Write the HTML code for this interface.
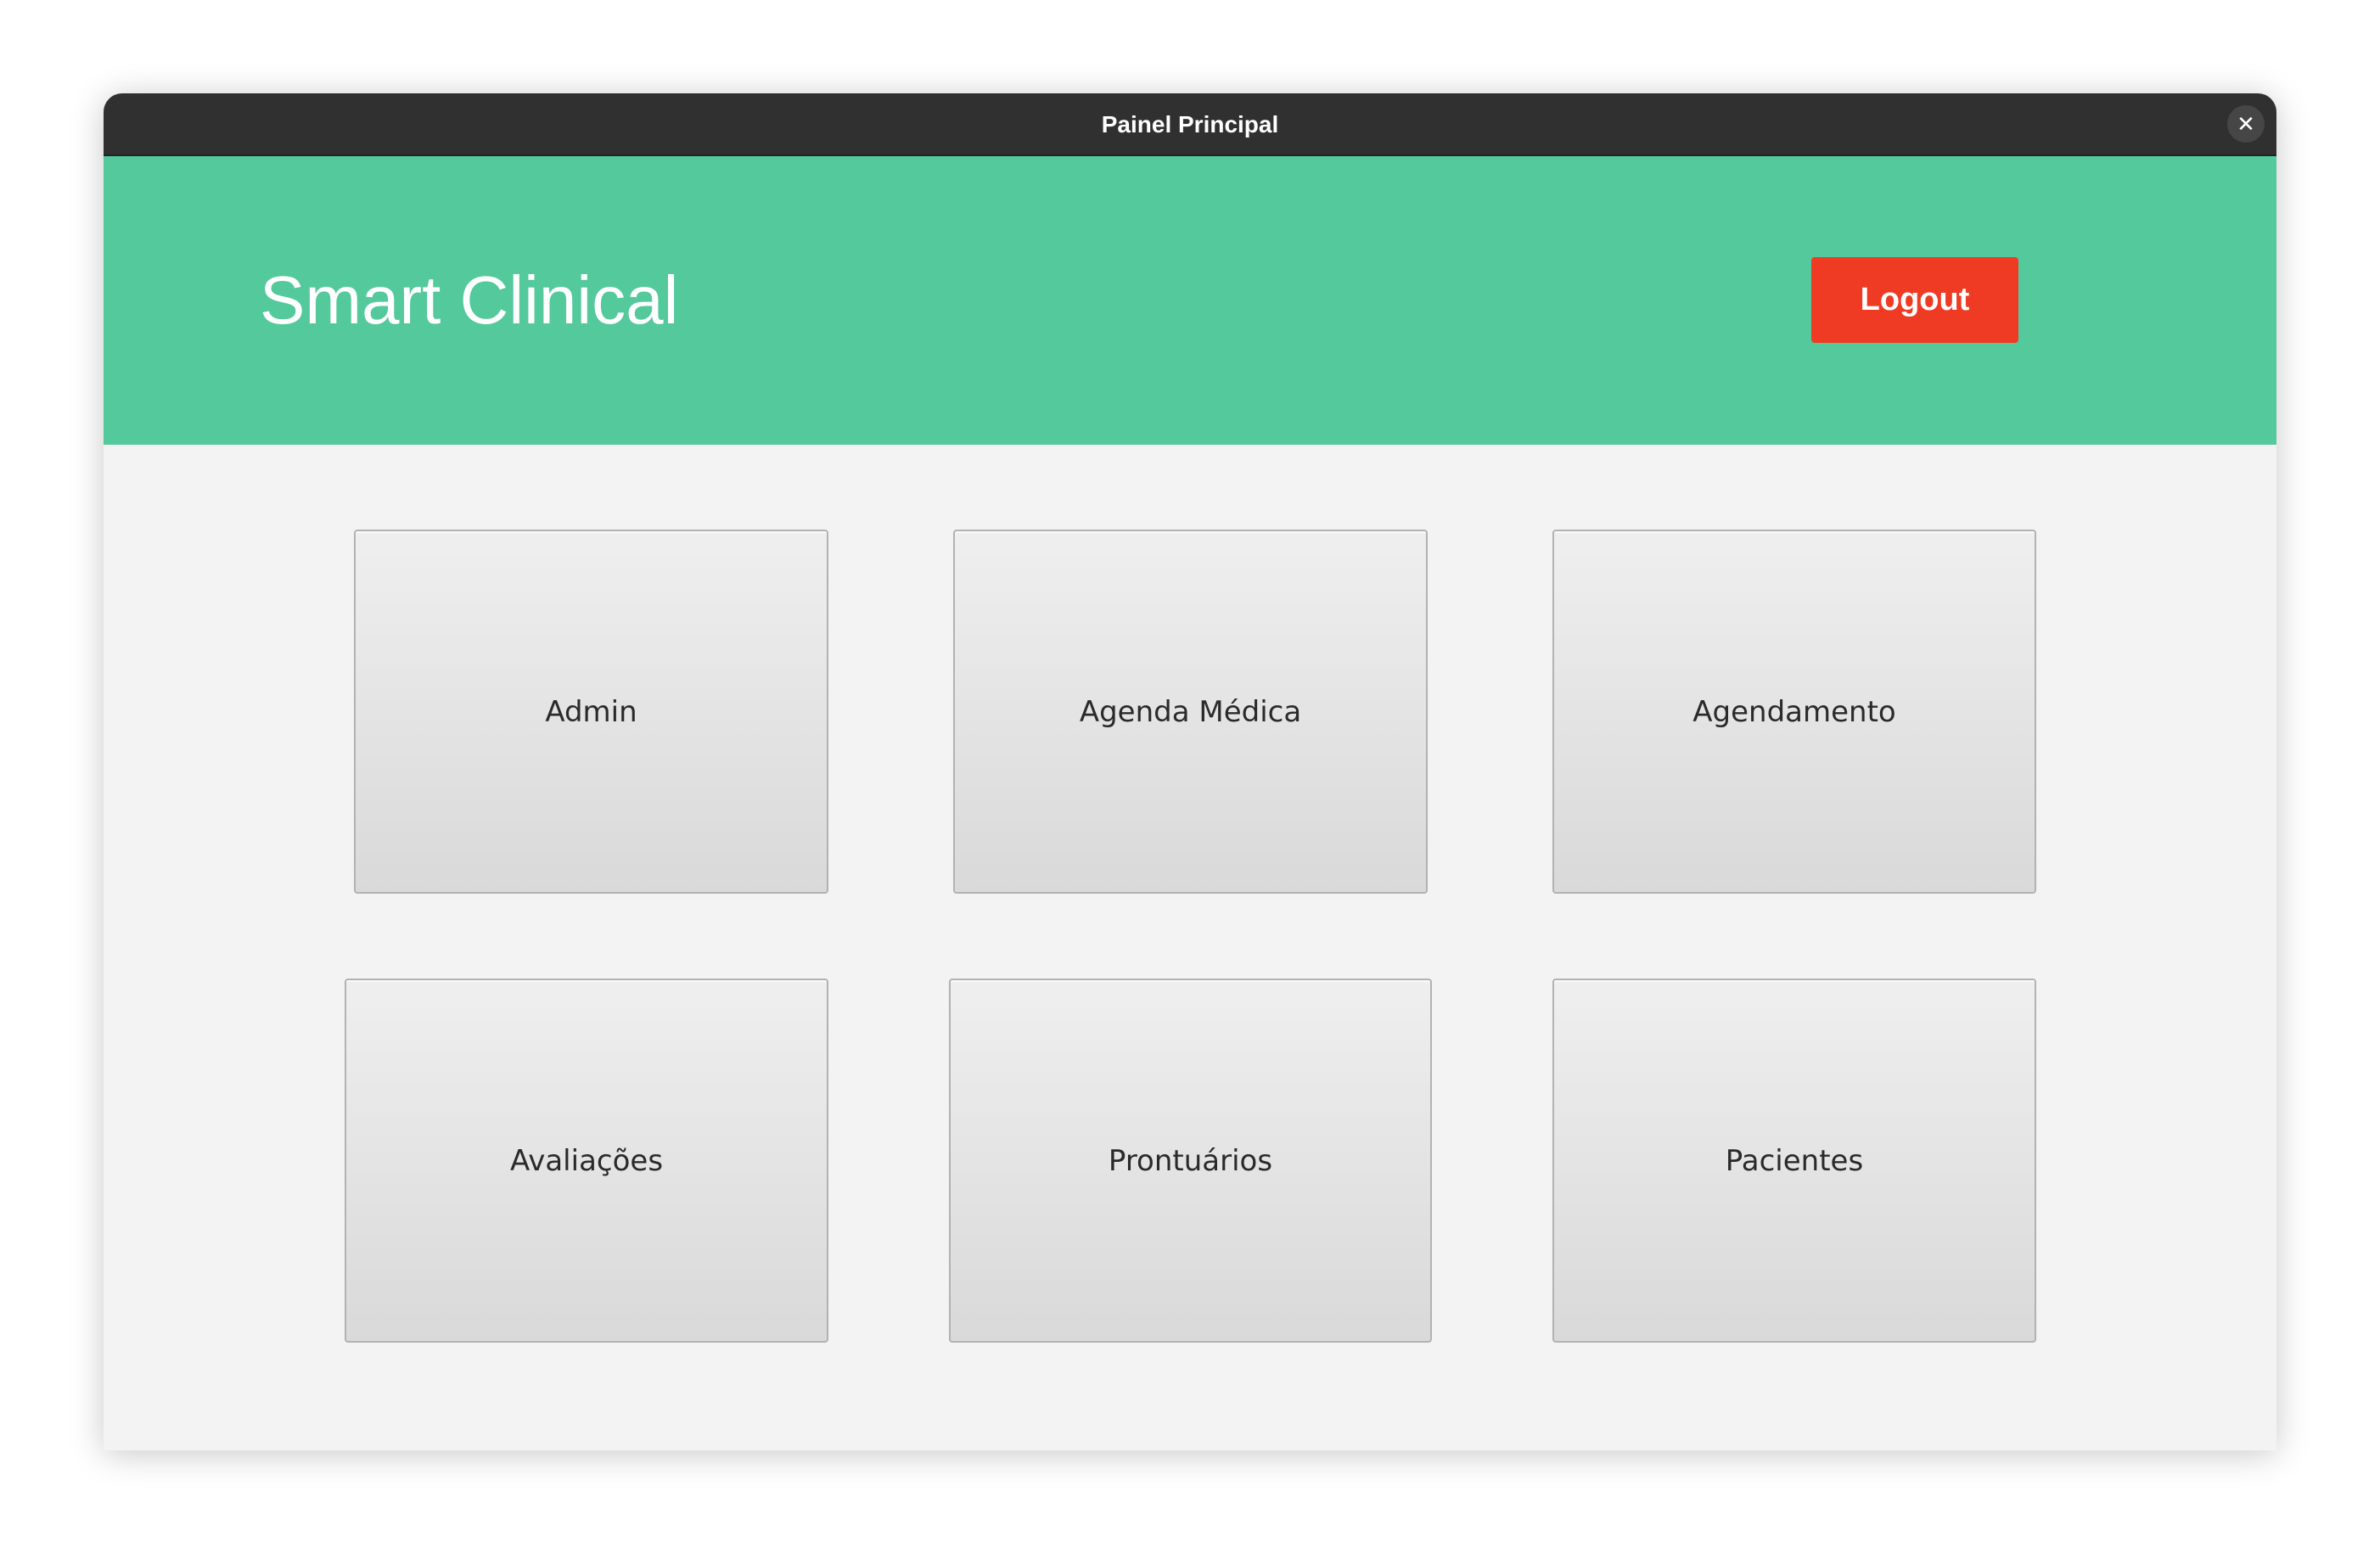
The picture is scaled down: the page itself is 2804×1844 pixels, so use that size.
<!DOCTYPE html>
<html><head><meta charset="utf-8"><style>
*{margin:0;padding:0;box-sizing:border-box}
html,body{width:2804px;height:1844px;background:#fff;overflow:hidden;font-family:"Liberation Sans","DejaVu Sans",sans-serif}
.win{position:absolute;left:122px;top:110px;width:2560px;height:1599px;background:#f3f3f3;border-radius:22px 22px 0 0;box-shadow:0 4px 40px rgba(0,0,0,.22);overflow:hidden}
.tb{position:absolute;left:0;top:0;width:100%;height:74px;background:#303030;border-bottom:2px solid #222;color:#fff;font-weight:bold;font-size:28px;text-align:center;line-height:74px}
.cls{position:absolute;left:2502px;top:14px;width:44px;height:44px;border-radius:50%;background:#464646;color:#fff;font-size:26px;line-height:44px;text-align:center;font-weight:bold}
.hd{position:absolute;left:0;top:74px;width:100%;height:340px;background:#53c99c}
.title{position:absolute;left:184px;top:120px;color:#fff;font-size:80px;line-height:100px;font-family:"Liberation Sans",sans-serif}
.lo{position:absolute;left:2012px;top:119px;width:244px;height:101px;background:#ef3b24;border-radius:4px;color:#fff;font-weight:bold;font-size:38px;text-align:center;line-height:101px}
.t{position:absolute;border:2px solid #b2b2b2;border-radius:4px;background:linear-gradient(#efefef,#d9d9d9);color:#2a2a2a;font-size:34px;font-family:"DejaVu Sans","Liberation Sans",sans-serif;display:flex;align-items:center;justify-content:center;box-shadow:inset 0 2px 0 #fafafa}
</style></head><body>
<div class="win">
<div class="tb">Painel Principal<div class="cls">✕</div></div>
<div class="hd"><div class="title">Smart Clinical</div><div class="lo">Logout</div></div>
<div class="t" style="left:295px;top:514px;width:559px;height:429px">Admin</div>
<div class="t" style="left:1001px;top:514px;width:559px;height:429px">Agenda Médica</div>
<div class="t" style="left:1707px;top:514px;width:570px;height:429px">Agendamento</div>
<div class="t" style="left:284px;top:1043px;width:570px;height:429px">Avaliações</div>
<div class="t" style="left:996px;top:1043px;width:569px;height:429px">Prontuários</div>
<div class="t" style="left:1707px;top:1043px;width:570px;height:429px">Pacientes</div>
</div>
</body></html>
